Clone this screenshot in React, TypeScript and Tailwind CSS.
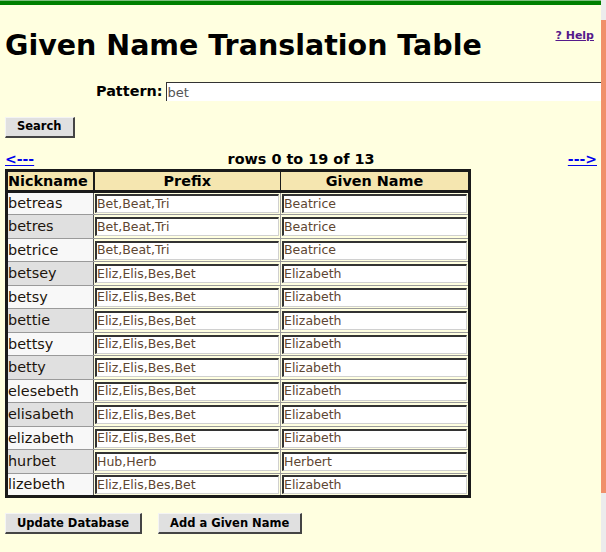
import React from "react";

const rows: [string, string, string][] = [
  ["betreas", "Bet,Beat,Tri", "Beatrice"],
  ["betres", "Bet,Beat,Tri", "Beatrice"],
  ["betrice", "Bet,Beat,Tri", "Beatrice"],
  ["betsey", "Eliz,Elis,Bes,Bet", "Elizabeth"],
  ["betsy", "Eliz,Elis,Bes,Bet", "Elizabeth"],
  ["bettie", "Eliz,Elis,Bes,Bet", "Elizabeth"],
  ["bettsy", "Eliz,Elis,Bes,Bet", "Elizabeth"],
  ["betty", "Eliz,Elis,Bes,Bet", "Elizabeth"],
  ["elesebeth", "Eliz,Elis,Bes,Bet", "Elizabeth"],
  ["elisabeth", "Eliz,Elis,Bes,Bet", "Elizabeth"],
  ["elizabeth", "Eliz,Elis,Bes,Bet", "Elizabeth"],
  ["hurbet", "Hub,Herb", "Herbert"],
  ["lizebeth", "Eliz,Elis,Bes,Bet", "Elizabeth"],
];

function Btn({ children }: { children: React.ReactNode }) {
  return (
    <button className="h-[21px] bg-[#e0e0e0] border-t border-l border-t-[#f4f4f4] border-l-[#f4f4f4] border-r-2 border-b-2 border-r-[#444] border-b-[#444] px-[11px] text-[11.5px] font-bold text-black leading-none">
      {children}
    </button>
  );
}

function Cell({ value }: { value: string }) {
  return (
    <td className="px-px py-0 border border-[#9a9a9a]">
      <div className="h-[19px] bg-white border-t-2 border-l-2 border-t-[#333] border-l-[#333] border-b border-r border-b-[#d0d0d0] border-r-[#d0d0d0] flex items-center pl-0 text-[12.5px] text-[#5e4632] leading-none whitespace-nowrap overflow-hidden">
        {value}
      </div>
    </td>
  );
}

export default function App() {
  return (
    <div
      className="w-[606px] h-[552px] overflow-hidden flex bg-[#ffffe0]"
      style={{ fontFamily: "'DejaVu Sans', Verdana, sans-serif" }}
    >
      <div className="w-[601px] flex-none overflow-hidden flex flex-col">
        <div className="h-px flex-none bg-[#7fbf7f]" />
        <div className="h-1 flex-none bg-[#008000]" />
        <div className="flex items-start justify-between pl-[5px] pr-[7px] mt-[23px]">
          <h1 className="text-[28.5px] font-bold text-black leading-[36px]">
            Given Name Translation Table
          </h1>
          <a
            href="#"
            className="text-[11px] font-bold text-[#551a8b] underline mt-[1px] leading-[14px]"
          >
            ? Help
          </a>
        </div>
        <div className="flex items-center mt-[18px] pl-[96px] h-[19px]">
          <span className="text-[14.4px] font-bold text-black mr-[3px]">Pattern:</span>
          <div className="h-[19px] w-[460px] flex-none bg-white border-t border-l border-[#333] flex items-center pl-px text-[13px] text-[#555] leading-none">
            bet
          </div>
        </div>
        <div className="pl-[5px] mt-[12px]">
          <Btn>Search</Btn>
        </div>
        <div className="grid grid-cols-[1fr_auto_1fr] items-end pl-[5px] pr-[4px] mt-[13px] h-[16px]">
          <a href="#" className="justify-self-start text-[14px] font-bold text-[#0000ee] underline leading-[16px]">
            &lt;---
          </a>
          <span className="text-[14.4px] font-bold text-black leading-[16px]">
            rows 0 to 19 of 13
          </span>
          <a href="#" className="justify-self-end text-[14px] font-bold text-[#0000ee] underline leading-[16px]">
            ---&gt;
          </a>
        </div>
        <div className="pl-[5px] mt-[2px]">
          <table className="table-fixed w-[463px] border-collapse border-[3px] border-[#1a1a1a]">
            <colgroup>
              <col className="w-[87px]" />
              <col className="w-[187px]" />
              <col className="w-[189px]" />
            </colgroup>
            <thead>
              <tr className="h-[21px] bg-[#f5e6b0]">
                <th className="border-r-2 border-[#1a1a1a] border-b-[3px] text-left pl-0 text-[14.4px] font-bold text-black leading-none">
                  Nickname
                </th>
                <th className="border-r border-[#1a1a1a] border-b-[3px] text-center text-[14.4px] font-bold text-black leading-none">
                  Prefix
                </th>
                <th className="border-b-[3px] border-[#1a1a1a] text-center text-[14.4px] font-bold text-black leading-none">
                  Given Name
                </th>
              </tr>
            </thead>
            <tbody>
              {rows.map(([nick, prefix, given], i) => (
                <tr key={nick} className="h-[23.5px]">
                  <td
                    className={
                      (i % 2 === 0 ? "bg-[#f8f8f8] " : "bg-[#e0e0e0] ") +
                      "border border-[#9a9a9a] border-r-[#555] pl-0 py-0 text-[14.4px] text-[#1c140c] leading-none whitespace-nowrap"
                    }
                  >
                    {nick}
                  </td>
                  <Cell value={prefix} />
                  <Cell value={given} />
                </tr>
              ))}
            </tbody>
          </table>
        </div>
        <div className="flex gap-[16px] pl-[5px] mt-[15px]">
          <Btn>Update Database</Btn>
          <Btn>Add a Given Name</Btn>
        </div>
      </div>
      <div className="w-[5px] flex-none flex flex-col bg-[#ececec]">
        <div className="h-[20px] flex-none" />
        <div className="h-[473px] flex-none bg-[#f0906a]" />
      </div>
    </div>
  );
}
